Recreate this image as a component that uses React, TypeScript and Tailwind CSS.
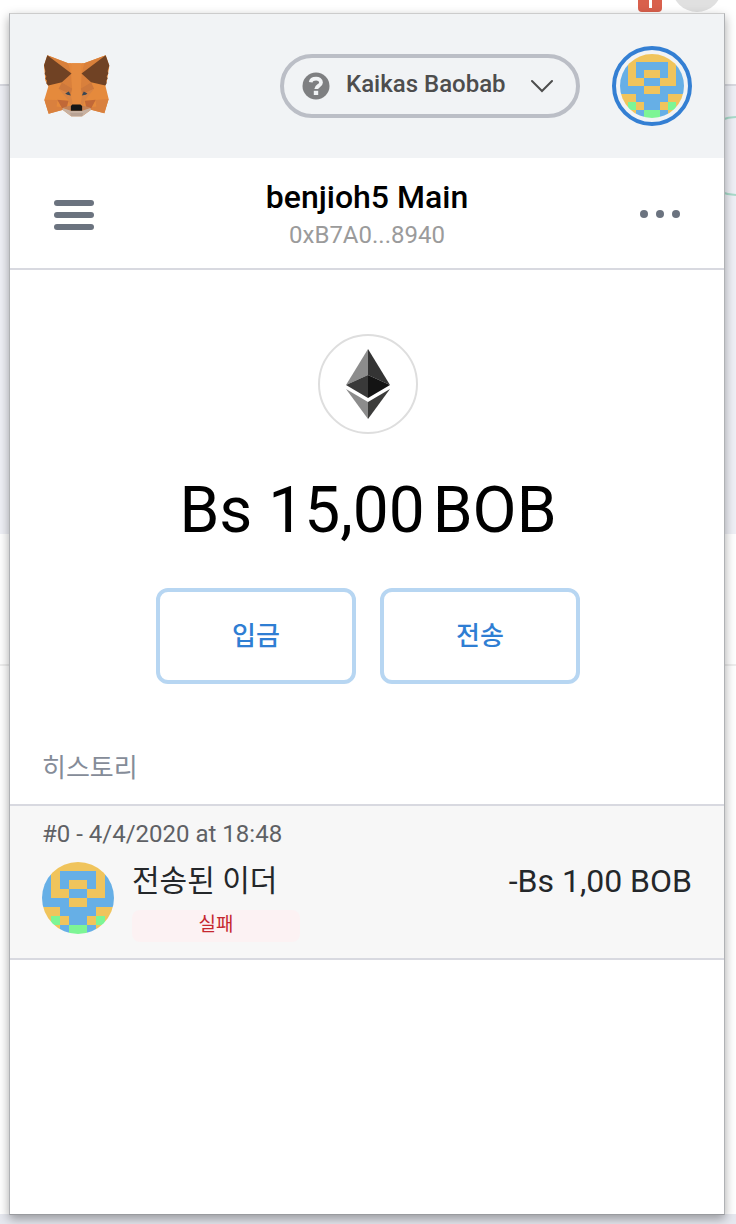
import React from "react";

const BLUE = "#66afe6";
const GOLD = "#f0c45c";
const GREEN = "#7df595";

const IDENTICON_ROWS = [
  "OOOOOOOO",
  "BOBBBBOB",
  "BOBOOBOB",
  "BOOBBOOB",
  "BBBOOBBB",
  "OOBBBBOO",
  "OGOBBOGO",
  "OOBGGBOO",
];

const CELL_COLOURS: Record<string, string> = { O: GOLD, B: BLUE, G: GREEN };

function Identicon({ className }: { className: string }) {
  return (
    <svg viewBox="0 0 8 8" shapeRendering="crispEdges" className={`block rounded-full ${className}`} aria-hidden="true">
      {IDENTICON_ROWS.map((row, y) =>
        row.split("").map((cell, x) => (
          <rect key={`${x}-${y}`} x={x} y={y} width="1" height="1" fill={CELL_COLOURS[cell]} />
        )),
      )}
    </svg>
  );
}

function Fox() {
  return (
    <svg viewBox="40 45 200 187" className="block h-[62px] w-[67px]" role="img" aria-label="MetaMask">
      <path
        fill="#e58a3c"
        d="M52 46 115 70H163L228 46 239 78 232 122 227 137 237 178 224 221 184 210 157 230H124L98 210 56 222 43 180 55 140 46 122 42 76Z"
      />
      <path fill="#d9803b" d="M52 46 115 70 125 101ZM228 46 163 70 155 101Z" />
      <path fill="#e4873c" d="M115 70 124 101 96 128 86 147 127 145 125 70ZM163 70 155 101 184 127 193 147 153 145 155 70Z" />
      <path fill="#d9803c" d="M124 101 127 146 96 128ZM155 101 153 146 184 127Z" />
      <path fill="#cd783c" d="M96 128 127 146 122 167 86 147ZM184 127 153 146 158 167 193 147Z" />
      <path fill="#e58b40" d="M126 70H153L155 101 153 150 157 197H123L127 150 124 101Z" />
      <path
        fill="#704224"
        d="M52 46 125 101 96 127 55 137 49 131 51 123 46 117 49 109 44 102 46 94 42 76ZM228 46 155 101 184 127 227 137 231 130 230 122 234 116 231 109 236 101 234 93 239 77Z"
      />
      <path fill="#d9803e" d="M43 180 83 181 80 200 113 205 98 211 56 222ZM237 178 197 181 200 200 167 205 184 210 224 221Z" />
      <path fill="#c16837" d="M82 180 116 183 111 201 97 206ZM198 180 165 183 169 201 184 206Z" />
      <path fill="#d98443" d="M86 147 122 163 128 190 122 197 116 182ZM193 147 158 163 153 190 159 197 165 182Z" />
      <path fill="#c58255" d="M99 203 123 197V214H157V197L182 203 157 216H124Z" />
      <path fill="#c7b1a2" d="M98 205 123 213H157L182 205 184 210 157 230H124L98 210Z" />
      <path fill="#b8a294" d="M121 220H160L157 230H124Z" />
      <path fill="#3a4753" d="M106 161 117 155 123 167 112 165ZM173 161 162 155 156 167 168 165Z" />
      <path fill="#151617" d="M127 194H152L157 199V213H123V199Z" />
    </svg>
  );
}

function Ether() {
  return (
    <svg viewBox="0 0 44 70" className="block h-[70px] w-[44px]" aria-hidden="true">
      <path fill="#8c8c8c" d="M22 0V26L0 36Z" />
      <path fill="#343434" d="M22 0V26L44 36Z" />
      <path fill="#393939" d="M22 26V49L0 36Z" />
      <path fill="#141414" d="M22 26V49L44 36Z" />
      <path fill="#8c8c8c" d="M0 40 22 53V70Z" />
      <path fill="#3c3c3b" d="M44 40 22 53V70Z" />
    </svg>
  );
}

function Backdrop() {
  return (
    <div className="absolute inset-0 flex flex-col overflow-hidden bg-white" aria-hidden="true">
      <div className="h-[84px]" />
      <div className="h-[450px] border-t-2 border-[#d9dae1] bg-[#eff0f6]" />
      <div className="h-[130px]" />
      <div className="h-[2px] bg-[#eeeeee]" />
      <div className="flex-1" />
      <div className="h-[10px] bg-[#e6e8ef]" />
      <div className="absolute right-[74px] top-0 flex h-3 w-6 justify-center rounded-b-[4px] bg-[#d9604c]">
        <span className="h-2 w-[3px] bg-white" />
      </div>
      <div className="absolute -top-[38px] right-[14px] size-[50px] rounded-full bg-[#e0e0e0]" />
      <div className="absolute right-0 top-[116px] h-20 w-10 rounded-l-full border-y-2 border-l-2 border-[#a9dccb]" />
    </div>
  );
}

const actionClass =
  "h-24 w-[200px] rounded-xl border-4 border-[#b7d6f2] bg-white text-[26px] font-medium text-[#2f7ed3]";

export default function App() {
  return (
    <div className="relative flex min-h-screen flex-col bg-white pb-[9px] pl-[9px] pr-[11px] pt-[13px] font-['Roboto','Noto_Sans_CJK_KR',sans-serif]">
      <Backdrop />
      <main className="relative flex w-full flex-1 flex-col border border-[#b0b2b5] border-t-[#cccccc] border-b-[#999b9f] bg-white shadow-[0_4px_10px_rgba(0,0,0,0.35)]">
        <header className="flex h-36 items-center bg-[#f1f3f5] pl-[33px] pr-8">
          <Fox />
          <button
            type="button"
            className="ml-auto flex h-16 w-[300px] items-center rounded-full border-4 border-[#bbbec6] pl-[18px] pr-[23px] text-2xl font-medium text-[#4d4d4d]"
          >
            <svg viewBox="0 0 28 28" className="size-7" aria-hidden="true">
              <circle cx="14" cy="14" r="13.5" fill="#7e7f81" />
              <path d="M8.7 10.2C9.4 5.6 19 5.3 19 10.4 19 13.9 14.4 13.8 14.2 17" fill="none" stroke="#f1f3f5" strokeWidth="3.8" />
              <rect x="11.8" y="18.8" width="4.4" height="4.2" fill="#f1f3f5" />
            </svg>
            <span className="ml-4 pb-1">Kaikas Baobab</span>
            <svg viewBox="0 0 22 14" className="ml-auto h-[14px] w-[22px]" aria-hidden="true">
              <path d="M1 2 11 12 21 2" fill="none" stroke="#4d4d4d" strokeWidth="2" strokeLinecap="round" />
            </svg>
          </button>
          <button type="button" aria-label="Account" className="ml-8 flex size-20 items-center justify-center rounded-full border-4 border-[#347fd3]">
            <Identicon className="size-16" />
          </button>
        </header>

        <section className="flex h-28 items-center justify-between border-b-2 border-[#d8d9e0] px-11">
          <button type="button" aria-label="Menu" className="flex w-10 flex-col gap-[6px] pt-1">
            <span className="h-[6px] rounded-full bg-[#6b737f]" />
            <span className="h-[6px] rounded-full bg-[#6b737f]" />
            <span className="h-[6px] rounded-full bg-[#6b737f]" />
          </button>
          <div className="pt-1 text-center">
            <h1 className="text-[32px] font-medium leading-10 text-black">benjioh5 Main</h1>
            <p className="text-2xl leading-9 text-[#9b9b9b]">0xB7A0...8940</p>
          </div>
          <button type="button" aria-label="Account options" className="flex gap-2 pt-[2px]">
            <span className="size-2 rounded-full bg-[#6b737f]" />
            <span className="size-2 rounded-full bg-[#6b737f]" />
            <span className="size-2 rounded-full bg-[#6b737f]" />
          </button>
        </section>

        <section className="flex flex-col items-center pl-[2px] pt-16">
          <div className="flex size-[100px] items-center justify-center rounded-full border-2 border-[#dedede]">
            <Ether />
          </div>
          <p className="mt-[38px] flex gap-2 text-[64px] leading-[78px] text-black">
            <span>Bs 15,00</span>
            <span>BOB</span>
          </p>
          <div className="mt-[38px] flex gap-6">
            <button type="button" className={actionClass}>입금</button>
            <button type="button" className={actionClass}>전송</button>
          </div>
        </section>

        <section className="mt-[66px]">
          <h2 className="h-14 border-b-2 border-[#d8d9e0] px-8 text-[26px] leading-9 text-[#858c98]">히스토리</h2>
          <article className="border-b-2 border-[#d8d9e0] bg-[#f7f7f7] px-8 pb-4 pt-3">
            <p className="text-2xl leading-8 text-[#5f6165]">#0 - 4/4/2020 at 18:48</p>
            <div className="mt-3 flex">
              <Identicon className="size-[72px]" />
              <div className="ml-[18px]">
                <h3 className="text-[30px] leading-[38px] text-[#24272a]">전송된 이더</h3>
                <p className="mt-[10px] h-8 w-[168px] rounded-lg bg-[#fcf2f3] text-center text-[19px] leading-[30px] text-[#c5282f]">실패</p>
              </div>
              <p className="ml-auto text-[32px] leading-[38px] text-[#24272a]">-Bs 1,00 BOB</p>
            </div>
          </article>
        </section>
      </main>
    </div>
  );
}
